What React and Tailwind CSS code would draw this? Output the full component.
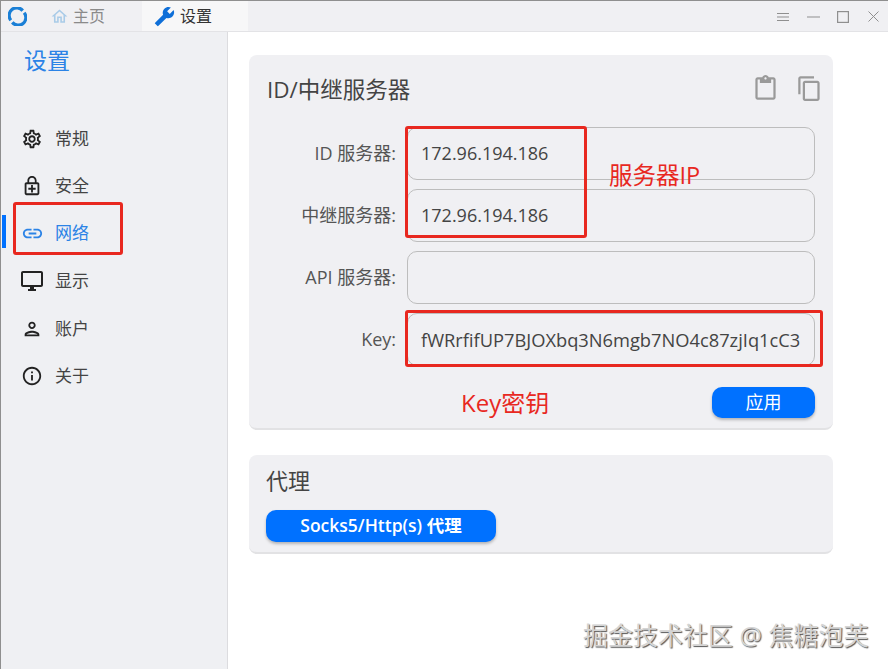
import React from "react";
import {
  MdOutlineHome, MdBuild, MdOutlineSettings, MdOutlineEnhancedEncryption, MdLink,
  MdOutlineDesktopWindows, MdOutlinePerson, MdInfoOutline, MdOutlineContentPaste, MdOutlineContentCopy,
} from "react-icons/md";

const FONT = '"Open Sans", "Noto Sans CJK SC", sans-serif';

const NAV = [
  { label: "常规", Icon: MdOutlineSettings, size: 22, h: "h-[47px]" },
  { label: "安全", Icon: MdOutlineEnhancedEncryption, size: 22, h: "h-[47px]" },
  { label: "网络", Icon: MdLink, size: 23, active: true, h: "h-[48px]" },
  { label: "显示", Icon: MdOutlineDesktopWindows, size: 24, h: "h-[48px]" },
  { label: "账户", Icon: MdOutlinePerson, size: 22, h: "h-[47px]" },
  { label: "关于", Icon: MdInfoOutline, size: 22, h: "h-[47px]" },
];

const ROWS = [
  { label: "ID 服务器:", value: "172.96.194.186", size: "text-[18px]" },
  { label: "中继服务器:", value: "172.96.194.186", size: "text-[18px]" },
  { label: "API 服务器:", value: "", size: "text-[18px]" },
  { label: "Key:", value: "fWRrfifUP7BJOXbq3N6mgb7NO4c87zjIq1cC3", size: "text-[18.3px]" },
];

function Logo() {
  return (
    <svg width="19" height="19" viewBox="0 0 20 20" fill="none" stroke="#1a7fd6" strokeWidth="3.4">
      <path d="M15.5 3.8A8 8 0 0 0 3 14" />
      <path d="M4.5 16.2A8 8 0 0 0 17 6" />
    </svg>
  );
}

function WindowButtons() {
  return (
    <div className="ml-auto mt-[1px] flex items-center text-[#8f8f8f]">
      <span className="flex w-[30px] justify-center">
        <svg width="12" height="10" viewBox="0 0 12 10" stroke="currentColor" strokeWidth="1" fill="none">
          <path d="M0 1.5h12M0 5h12M0 8.5h12" />
        </svg>
      </span>
      <span className="flex w-[30px] justify-center">
        <svg width="13" height="12" viewBox="0 0 13 12" stroke="currentColor" strokeWidth="1" fill="none">
          <path d="M0 6h13" />
        </svg>
      </span>
      <span className="flex w-[30px] justify-center">
        <svg width="12" height="12" viewBox="0 0 12 12" stroke="currentColor" strokeWidth="1.2" fill="none">
          <rect x="0.6" y="0.6" width="10.8" height="10.8" />
        </svg>
      </span>
      <span className="flex w-[30px] justify-center">
        <svg width="11" height="11" viewBox="0 0 11 11" stroke="currentColor" strokeWidth="1" fill="none">
          <path d="M0.5 0.5l10 10M10.5 0.5l-10 10" />
        </svg>
      </span>
    </div>
  );
}

function TitleBar() {
  return (
    <div className="flex h-[31px] shrink-0 items-center border-b border-[#e3e3e6] bg-[#f0f0f3]">
      <div className="flex w-[41px] justify-start pl-[7px]"><Logo /></div>
      <div className="flex h-full w-[100px] items-center pl-[8px] text-[16px] text-[#8a8a8a]">
        <MdOutlineHome size={19} className="mr-[4px] text-[#a9cbe8]" />
        主页
      </div>
      <div className="flex h-full w-[106px] items-center bg-[#f7f7f8] pl-[12px] text-[16px] text-[#333]">
        <MdBuild size={21} className="mr-[5px] -scale-x-100 text-[#0f6fd8]" />
        设置
      </div>
      <WindowButtons />
    </div>
  );
}

function Sidebar() {
  return (
    <aside className="relative w-[227px] shrink-0 border-r border-[#dcdcdf] bg-[#eff0f3]">
      <h1 className="pl-[23px] pt-[12px] text-[23px] leading-[32px] font-normal text-[#2b83e6]">设置</h1>
      <nav className="mt-[39px] flex flex-col">
        {NAV.map(({ label, Icon, size, active, h }) => (
          <div key={label} className={`relative flex items-center ${h} ${active ? "text-[#2b83e6]" : "text-[#444]"}`}>
            {active && <span className="absolute left-[1px] top-[6px] h-[33px] w-[4px] bg-[#0071ff]" />}
            <span className={`flex w-[54px] justify-center pl-[8px] ${active ? "text-[#2b83e6]" : "text-[#222]"}`}>
              <Icon size={size} />
            </span>
            <span className="text-[17px]">{label}</span>
          </div>
        ))}
      </nav>
    </aside>
  );
}

function Row({ label, value, size }) {
  return (
    <div className="flex items-center">
      <label className="w-[147px] text-right text-[18px] text-[#555]">{label}</label>
      <div className={`ml-[11px] flex h-[53px] w-[408px] items-center overflow-hidden rounded-[10px] border border-[#bdbdbd] pl-[13px] text-[#444] whitespace-nowrap ${size}`}>
        {value}
      </div>
    </div>
  );
}

function Button({ children, className }) {
  return (
    <button className={`rounded-[10px] bg-[#0071ff] text-white shadow-[0_2px_3px_rgba(0,0,0,0.25)] ${className}`}>
      {children}
    </button>
  );
}

function Main() {
  return (
    <main className="flex-1 bg-white pl-[21px] pt-[23px]">
      <section className="h-[375px] w-[584px] rounded-[8px] border-b-2 border-[#e2e2e4] bg-[#f0f0f3]">
        <div className="flex h-[72px] items-center pl-[18px] pr-[10px]">
          <h2 className="-mt-[2px] text-[22.5px] font-normal text-[#444]">ID/中继服务器</h2>
          <div className="ml-auto -mt-[5px] flex items-center gap-[17px] pl-[2px] text-[#9a9a9a]">
            <MdOutlineContentPaste size={27} />
            <MdOutlineContentCopy size={27} />
          </div>
        </div>
        <div className="flex flex-col gap-[9px]">
          {ROWS.map((r) => <Row key={r.label} {...r} />)}
        </div>
        <div className="mt-[21px] flex justify-end pr-[18px]">
          <Button className="h-[31px] w-[103px] pb-[2px] text-[18px] leading-none">应用</Button>
        </div>
      </section>
      <section className="mt-[25px] h-[99px] w-[584px] rounded-[8px] border-b-2 border-[#e2e2e4] bg-[#f0f0f3] pl-[17px]">
        <h2 className="pt-[10px] text-[22px] leading-[30px] font-normal text-[#444]">代理</h2>
        <Button className="mt-[15px] h-[32px] w-[230px] text-[17.5px] font-semibold leading-none">Socks5/Http(s) 代理</Button>
      </section>
    </main>
  );
}

function Annotations() {
  return (
    <>
      <div className="absolute left-[12px] top-[201px] h-[53px] w-[110px] rounded-[3px] border-[3px] border-[#e8281f]" />
      <div className="absolute left-[404px] top-[125px] h-[112px] w-[182px] rounded-[3px] border-[3px] border-[#e8281f]" />
      <div className="absolute left-[404px] top-[309px] h-[57px] w-[418px] rounded-[3px] border-[3px] border-[#e8281f]" />
      <div className="absolute left-[608px] top-[159px] text-[23.5px] leading-[30px] text-[#e8281f]">服务器IP</div>
      <div className="absolute left-[460px] top-[387px] text-[24px] leading-[30px] text-[#e8281f]">Key密钥</div>
      <div className="absolute left-[582px] top-[617px] text-[25px] leading-[34px] text-[#d4d4d4] [text-shadow:1px_1px_1px_#555]">
        掘金技术社区 @ 焦糖泡芙
      </div>
    </>
  );
}

export default function App() {
  return (
    <div className="relative flex h-[669px] w-[888px] flex-col overflow-hidden border-l border-t border-[#8f8f8f] bg-white" style={{ fontFamily: FONT }}>
      <TitleBar />
      <div className="flex flex-1">
        <Sidebar />
        <Main />
      </div>
      <Annotations />
    </div>
  );
}
